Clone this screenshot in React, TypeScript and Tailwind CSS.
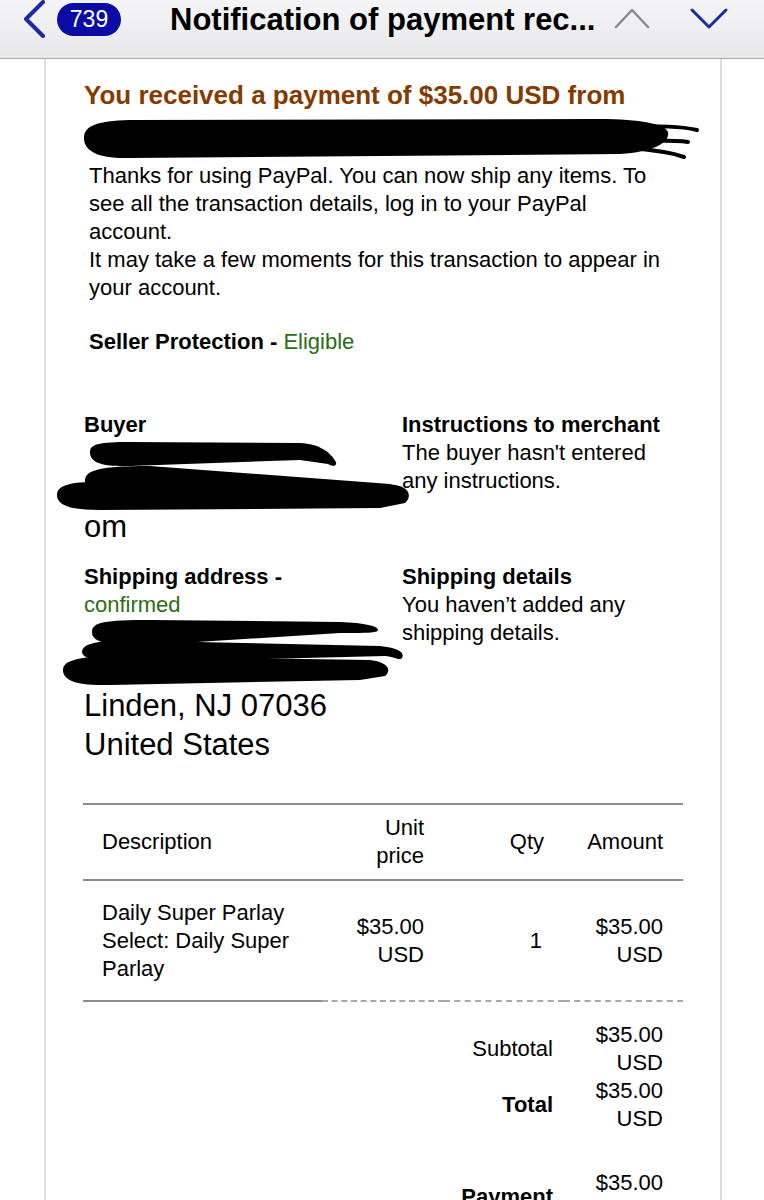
import React from 'react';

type Line = { label: string; bold?: boolean; value: string[] };

const totals: Line[] = [
    { label: 'Subtotal', value: ['$35.00', 'USD'] },
    { label: 'Total', bold: true, value: ['$35.00', 'USD'] },
];

// black marker scribbles drawn over private details
const Scribble = ({ x, y, w, h, paths, strokes = [] }: { x: number; y: number; w: number; h: number; paths: string[]; strokes?: string[] }) => (
    <svg width={w} height={h} viewBox={`${x} ${y} ${w} ${h}`} className="block relative z-10 overflow-visible">
        {paths.map((d, i) => <path key={i} d={d} fill="#000" />)}
        {strokes.map((d, i) => <path key={'s' + i} d={d} fill="none" stroke="#000" strokeWidth={4} strokeLinecap="round" />)}
    </svg>
);

const TopBar = () => (
    <div className="h-[59px] border-b border-[#a9a9ab] bg-gradient-to-b from-[#f5f5f7] to-[#e8e8ea]">
        <div className="h-[38px] flex items-center pl-[21px] pr-[34px]">
            <svg width="26" height="40" viewBox="0 0 26 40" className="flex-none">
                <polyline points="22,3 5,20 22,37" fill="none" stroke="#1c2aa6" strokeWidth="4" strokeLinecap="round" strokeLinejoin="round" />
            </svg>
            <div className="ml-[10px] w-[64px] h-[33px] rounded-full bg-[#0b0ca4] text-white text-[23px] leading-[33px] text-center flex-none">739</div>
            <div className="ml-[49px] text-[31px] leading-[31px] font-bold text-black whitespace-nowrap">Notification of payment rec...</div>
            <div className="ml-auto flex items-center gap-[36px]">
                <svg width="40" height="24" viewBox="0 0 40 24">
                    <polyline points="4,20 20,3 36,20" fill="none" stroke="#8a8a8c" strokeWidth="2.5" strokeLinecap="round" strokeLinejoin="round" />
                </svg>
                <svg width="42" height="24" viewBox="0 0 42 24">
                    <polyline points="4,3 21,20 38,3" fill="none" stroke="#1c2aa6" strokeWidth="3" strokeLinecap="round" strokeLinejoin="round" />
                </svg>
            </div>
        </div>
    </div>
);

export default function App() {
    return (
        <div className="w-[764px] h-[1200px] overflow-hidden bg-white text-black font-['Liberation_Sans',Arial,sans-serif]">
            <TopBar />
            <div className="ml-[44px] w-[678px] min-h-[1141px] border-x-2 border-[#dedede] pl-[38px] pt-[21px]">
                <h1 className="text-[26px] leading-[30px] font-bold text-[#853a00]">You received a payment of $35.00 USD from</h1>
                <div className="mt-[3px] -ml-[22px]">
                    <Scribble
                        x={62} y={113} w={650} h={49}
                        paths={['M84,138 C84,126 96,121 130,120 L600,119 C640,119 665,124 668,132 C670,142 655,152 620,154 L130,158 C100,159 84,152 84,138 Z']}
                        strokes={['M630,127 C660,126 680,126 697,130', 'M630,141 C660,140 675,140 688,142', 'M630,148 C655,150 670,152 684,157']}
                    />
                </div>

                <div className="pl-[5px] text-[22px] leading-[28px] w-[585px]">
                    <p>Thanks for using PayPal. You can now ship any items. To see all the transaction details, log in to your PayPal account.</p>
                    <p>It may take a few moments for this transaction to appear in your account.</p>
                    <p className="mt-[26px]">
                        <span className="font-bold">Seller Protection - </span>
                        <span className="text-[#2b6e12]">Eligible</span>
                    </p>
                </div>

                <div className="mt-[55px] grid grid-cols-[318px_1fr] text-[22px] leading-[28px]">
                    <div>
                        <div className="font-bold">Buyer</div>
                        <div className="-ml-[30px]">
                            <Scribble
                                x={54} y={439} w={360} h={71}
                                paths={[
                                    'M90,452 C90,444 100,442 130,442 L300,443 C320,444 330,452 336,462 C337,466 333,467 328,464 L300,460 L130,466 C100,467 90,462 90,452 Z',
                                    'M85,480 C86,470 100,466 150,466 L390,484 C400,486 400,490 390,491 L150,492 C95,493 84,489 85,480 Z',
                                    'M57,495 C57,484 75,481 110,482 L395,485 C410,487 412,497 405,503 L380,508 L100,510 C70,510 57,505 57,495 Z',
                                ]}
                            />
                        </div>
                        <div className="text-[31px] leading-[34px]">om</div>
                    </div>
                    <div>
                        <div className="font-bold">Instructions to merchant</div>
                        <div>The buyer hasn't entered<br />any instructions.</div>
                    </div>

                    <div className="mt-[19px]">
                        <div className="font-bold">Shipping address -</div>
                        <div className="text-[#2b6e12]">confirmed</div>
                        <div className="-ml-[30px]">
                            <Scribble
                                x={54} y={619} w={360} h={67}
                                paths={[
                                    'M92,632 C92,622 105,620 150,620 L340,622 C365,623 378,626 378,630 C378,633 365,633 340,633 L150,645 C105,646 92,642 92,632 Z',
                                    'M82,652 C83,642 100,640 150,641 L380,646 C398,648 405,652 402,658 C400,661 395,657 385,656 L150,662 C100,663 82,659 82,652 Z',
                                    'M63,670 C63,660 80,656 120,656 L370,660 C388,662 392,670 385,676 L360,680 L110,685 C75,686 63,680 63,670 Z',
                                ]}
                            />
                        </div>
                        <div className="text-[31px] leading-[39px]">Linden, NJ 07036<br />United States</div>
                    </div>
                    <div className="mt-[19px]">
                        <div className="font-bold">Shipping details</div>
                        <div>You haven’t added any<br />shipping details.</div>
                    </div>
                </div>

                {/* item table */}
                <div className="mt-[39px] -ml-[1px] w-[600px] text-[22px] leading-[28px]">
                    <div className="grid grid-cols-[239px_122px_120px_119px] border-y-2 border-[#8c8c8c] py-[9px] items-center">
                        <div className="pl-[19px]">Description</div>
                        <div className="pr-[20px] text-right">Unit<br />price</div>
                        <div className="pr-[20px] text-right">Qty</div>
                        <div className="pr-[20px] text-right">Amount</div>
                    </div>
                    <div className="grid grid-cols-[239px_122px_120px_119px]">
                        <div className="pl-[19px] pt-[18px] pb-[17px] border-b-2 border-[#8c8c8c]">Daily Super Parlay<br />Select: Daily Super<br />Parlay</div>
                        <div className="pr-[20px] text-right flex flex-col justify-center border-b-2 border-dashed border-[#a8a8a8]">$35.00<br />USD</div>
                        <div className="pr-[22px] text-right flex flex-col justify-center border-b-2 border-dashed border-[#a8a8a8]">1</div>
                        <div className="pr-[20px] text-right flex flex-col justify-center border-b-2 border-dashed border-[#a8a8a8]">$35.00<br />USD</div>
                    </div>

                    <div className="mt-[19px]">
                        {totals.map((t) => (
                            <div key={t.label} className="flex items-center justify-end pr-[20px]">
                                <div className={`mr-[20px] text-right ${t.bold ? 'font-bold' : ''}`}>{t.label}</div>
                                <div className="w-[90px] text-right">{t.value[0]}<br />{t.value[1]}</div>
                            </div>
                        ))}
                        <div className="mt-[36px] flex items-center justify-end pr-[20px]">
                            <div className="mr-[20px] text-right font-bold">Payment</div>
                            <div className="w-[90px] text-right">$35.00<br />USD</div>
                        </div>
                    </div>
                </div>
            </div>
        </div>
    );
}
